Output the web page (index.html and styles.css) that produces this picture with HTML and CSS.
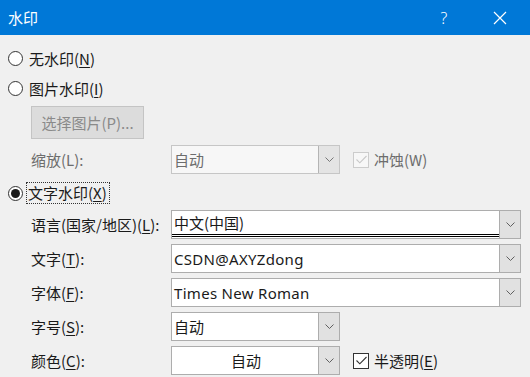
FILE: index.html
```html
<!DOCTYPE html>
<html lang="zh-CN">
<head>
    <meta charset="UTF-8">
    <title>水印</title>
    <link rel="stylesheet" href="styles.css">
</head>
<body>
  <div class="dialog">
    <div class="titlebar">
      <span class="title">水印</span>
      <span class="tb-btn">?</span>
      <span class="tb-btn close">
        <svg width="14" height="14" viewBox="0 0 14 14"><path d="M1 1 L13 13 M13 1 L1 13" stroke="#fff" stroke-width="1.2" fill="none"/></svg>
      </span>
    </div>

    <div class="content">
      <div class="radio-row">
        <span class="radio"></span>
        <span>无水印(<u>N</u>)</span>
      </div>
      <div class="radio-row">
        <span class="radio"></span>
        <span>图片水印(<u>I</u>)</span>
      </div>
      <div class="pick-btn">选择图片(P)...</div>

      <div class="field-row first">
        <span class="label disabled">缩放(L):</span>
        <div class="combo small disabled">
          <span class="combo-text">自动</span>
          <span class="drop">
            <svg width="9" height="5" viewBox="0 0 9 5"><polyline points="0.5,0.5 4.5,4.5 8.5,0.5" stroke="#777" fill="none"/></svg>
          </span>
        </div>
        <span class="check disabled">
          <svg width="11" height="9" viewBox="0 0 11 9"><polyline points="0.5,4.5 3.8,7.8 10.5,1" stroke="#c8c8c8" stroke-width="1.1" fill="none"/></svg>
        </span>
        <span class="check-label disabled">冲蚀(W)</span>
      </div>

      <div class="radio-row text-wm">
        <span class="radio on"></span>
        <span class="focus">文字水印(<u>X</u>)</span>
      </div>

      <div class="field-row">
        <span class="label">语言(国家/地区)(<u>L</u>):</span>
        <div class="combo wide">
          <span class="combo-text underline">中文(中国)</span>
          <span class="drop">
            <svg width="9" height="5" viewBox="0 0 9 5"><polyline points="0.5,0.5 4.5,4.5 8.5,0.5" stroke="#606060" fill="none"/></svg>
          </span>
        </div>
      </div>
      <div class="field-row">
        <span class="label">文字(<u>T</u>):</span>
        <div class="combo wide">
          <span class="combo-text latin">CSDN@AXYZdong</span>
          <span class="drop">
            <svg width="9" height="5" viewBox="0 0 9 5"><polyline points="0.5,0.5 4.5,4.5 8.5,0.5" stroke="#606060" fill="none"/></svg>
          </span>
        </div>
      </div>
      <div class="field-row">
        <span class="label">字体(<u>F</u>):</span>
        <div class="combo wide">
          <span class="combo-text latin">Times New Roman</span>
          <span class="drop">
            <svg width="9" height="5" viewBox="0 0 9 5"><polyline points="0.5,0.5 4.5,4.5 8.5,0.5" stroke="#606060" fill="none"/></svg>
          </span>
        </div>
      </div>
      <div class="field-row">
        <span class="label">字号(<u>S</u>):</span>
        <div class="combo small">
          <span class="combo-text">自动</span>
          <span class="drop">
            <svg width="9" height="5" viewBox="0 0 9 5"><polyline points="0.5,0.5 4.5,4.5 8.5,0.5" stroke="#606060" fill="none"/></svg>
          </span>
        </div>
      </div>
      <div class="field-row">
        <span class="label">颜色(<u>C</u>):</span>
        <div class="combo small">
          <span class="combo-text center">自动</span>
          <span class="drop">
            <svg width="9" height="5" viewBox="0 0 9 5"><polyline points="0.5,0.5 4.5,4.5 8.5,0.5" stroke="#606060" fill="none"/></svg>
          </span>
        </div>
        <span class="check">
          <svg width="11" height="9" viewBox="0 0 11 9"><polyline points="0.5,4.5 3.8,7.8 10.5,1" stroke="#333" stroke-width="1.1" fill="none"/></svg>
        </span>
        <span class="check-label">半透明(<u>E</u>)</span>
      </div>
    </div>
  </div>
</body>
</html>
```

FILE: styles.css
```css
body {
    margin: 0;
    background-color: #f0f0f0;
    font-family: "Noto Sans CJK SC", "Noto Sans", sans-serif;
    font-size: 15px;
    color: #1a1a1a;
    overflow: hidden;
}
u {
    text-decoration-thickness: 1px;
    text-underline-offset: 2px;
}
.dialog {
    width: 530px;
    height: 377px;
    overflow: hidden;
}
.titlebar {
    height: 35px;
    background-color: #0078d7;
    color: white;
    display: flex;
    align-items: center;
}
.title {
    flex: 1;
    padding-left: 8px;
}
.tb-btn {
    width: 56px;
    height: 35px;
    display: flex;
    align-items: center;
    justify-content: center;
    font-family: "Noto Sans", sans-serif;
    font-size: 16px;
    font-weight: 300;
}
.tb-btn.close {
    margin-right: 2px;
}
.content {
    padding: 8px 0 0 8px;
}
.radio-row {
    height: 30px;
    display: flex;
    align-items: center;
    gap: 6px;
}
.radio {
    width: 13px;
    height: 13px;
    border: 1px solid #333;
    border-radius: 50%;
    background: white;
    display: flex;
    align-items: center;
    justify-content: center;
}
.radio.on::after {
    content: "";
    width: 9px;
    height: 9px;
    border-radius: 50%;
    background: #1a1a1a;
}
.text-wm {
    height: 24px;
    margin-top: 7px;
    gap: 4px;
}
.focus {
    outline: 1px dotted #333;
    padding: 0 2px 0 1px;
    line-height: 20px;
}
.pick-btn {
    margin: 3px 0 0 23px;
    width: 111px;
    height: 31px;
    border: 1px solid #c4c4c4;
    background: #dcdcdc;
    color: #8a8a8a;
    display: flex;
    align-items: center;
    justify-content: center;
}
.field-row {
    display: flex;
    align-items: center;
    margin-top: 5px;
    height: 29px;
}
.field-row.first {
    margin-top: 6px;
}
.label {
    width: 140px;
    padding-left: 23px;
    flex-shrink: 0;
}
.disabled {
    color: #6d6d6d;
}
.combo {
    height: 27px;
    border: 1px solid #adadad;
    background: white;
    display: flex;
    align-items: stretch;
}
.combo.small {
    width: 167px;
}
.combo.wide {
    width: 348px;
}
.combo.disabled {
    background: #f7f7f7;
    border-color: #c6c6c6;
}
.combo-text {
    flex: 1;
    padding-left: 2px;
    display: flex;
    align-items: center;
    white-space: nowrap;
    overflow: hidden;
}
.combo-text.center {
    justify-content: center;
}
.combo-text.latin {
    font-family: "Noto Sans", "Noto Sans CJK SC", sans-serif;
    letter-spacing: 0.3px;
}
.combo-text.underline {
    border-bottom: 3px double #000;
    margin-bottom: 1px;
}
.drop {
    width: 20px;
    background: #e1e1e1;
    border-left: 1px solid #adadad;
    display: flex;
    align-items: center;
    justify-content: center;
}
.combo.disabled .drop {
    background: #e4e4e4;
    border-left-color: #b4b4b4;
}
.check {
    width: 14px;
    height: 14px;
    margin-left: 13px;
    border: 1px solid #333;
    background: white;
    display: flex;
    align-items: center;
    justify-content: center;
}
.check.disabled {
    border-color: #cccccc;
    background: #f7f7f7;
}
.check-label {
    margin-left: 5px;
}
```
